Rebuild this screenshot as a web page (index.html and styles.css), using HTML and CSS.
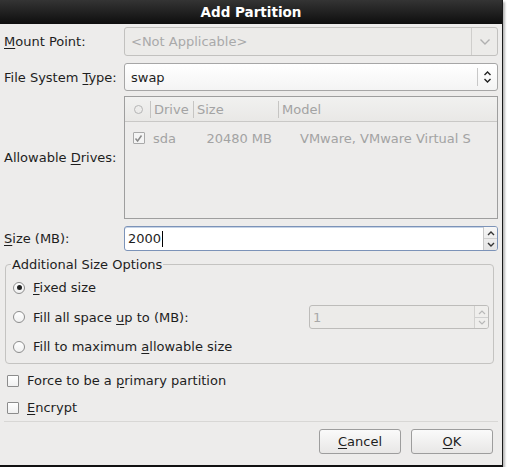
FILE: index.html
```html
<!DOCTYPE html>
<html>
<head>
<meta charset="utf-8">
<link rel="stylesheet" href="styles.css">
</head>
<body>
<div class="window">
  <div class="titlebar">Add Partition</div>
  <div class="content">
    <div class="row row-mount">
      <div class="label"><u>M</u>ount Point:</div>
      <div class="combo disabled">
        <span class="combo-text">&lt;Not Applicable&gt;</span>
        <span class="combo-btn">
          <svg width="12" height="8" viewBox="0 0 12 8"><path d="M1.5 1.5 L6 6 L10.5 1.5" fill="none" stroke="#b0b0b0" stroke-width="1.4"/></svg>
        </span>
      </div>
    </div>
    <div class="row row-fs">
      <div class="label">File System <u>T</u>ype:</div>
      <div class="combo active">
        <span class="combo-text">swap</span>
        <span class="combo-btn sep">
          <svg width="9" height="14" viewBox="0 0 9 14"><path d="M1.5 5 L4.5 2 L7.5 5 M1.5 9 L4.5 12 L7.5 9" fill="none" stroke="#222" stroke-width="1.4"/></svg>
        </span>
      </div>
    </div>
    <div class="row row-drives">
      <div class="label">Allowable <u>D</u>rives:</div>
      <div class="drives">
        <div class="drives-head">
          <div class="c1"><span class="hcircle"></span></div>
          <div class="c2">Drive</div>
          <div class="c3">Size</div>
          <div class="c4">Model</div>
        </div>
        <div class="drives-row">
          <div class="c1"><span class="check checked-dis">
            <svg width="9" height="9" viewBox="0 0 9 9"><path d="M1.5 4.5 L3.6 7 L7.5 1.5" fill="none" stroke="#8a8a8a" stroke-width="1.5"/></svg>
          </span></div>
          <div class="c2">sda</div>
          <div class="c3 num">20480 MB</div>
          <div class="c4 model">VMware, VMware Virtual S</div>
        </div>
      </div>
    </div>
    <div class="row row-size">
      <div class="label"><u>S</u>ize (MB):</div>
      <div class="spin focused">
        <span class="spin-text">2000<span class="caret"></span></span>
        <span class="spin-btns">
          <span class="sb"><svg width="8" height="6" viewBox="0 0 8 6"><path d="M1 5 L4 2 L7 5" fill="none" stroke="#333" stroke-width="1.4"/></svg></span>
          <span class="sb"><svg width="8" height="6" viewBox="0 0 8 6"><path d="M1 1 L4 4 L7 1" fill="none" stroke="#333" stroke-width="1.4"/></svg></span>
        </span>
      </div>
    </div>
    <fieldset class="group">
      <legend>Additional Size Options</legend>
      <div class="opt">
        <span class="radio on"></span><span><u>F</u>ixed size</span>
      </div>
      <div class="opt opt-fill">
        <span class="radio"></span><span>Fill all space <u>u</u>p to (MB):</span>
        <div class="spin small disabled">
          <span class="spin-text">1</span>
          <span class="spin-btns">
            <span class="sb"><svg width="8" height="6" viewBox="0 0 8 6"><path d="M1 5 L4 2 L7 5" fill="none" stroke="#b8b8b8" stroke-width="1.2"/></svg></span>
            <span class="sb"><svg width="8" height="6" viewBox="0 0 8 6"><path d="M1 1 L4 4 L7 1" fill="none" stroke="#b8b8b8" stroke-width="1.2"/></svg></span>
          </span>
        </div>
      </div>
      <div class="opt">
        <span class="radio"></span><span>Fill to maximum <u>a</u>llowable size</span>
      </div>
    </fieldset>
    <div class="chk-row chk-first">
      <span class="check"></span><span>Force to be a <u>p</u>rimary partition</span>
    </div>
    <div class="chk-row">
      <span class="check"></span><span><u>E</u>ncrypt</span>
    </div>
    <div class="buttons">
      <button class="btn"><u>C</u>ancel</button>
      <button class="btn"><u>O</u>K</button>
    </div>
  </div>
</div>
</body>
</html>
```

FILE: styles.css
```css
html, body {
  margin: 0;
  padding: 0;
  background: #ffffff;
}
body {
  font-family: "DejaVu Sans", "Liberation Sans", sans-serif;
  font-size: 13px;
  color: #1e1e1e;
}
u { text-decoration: underline; text-underline-offset: 2px; }

.window {
  width: 502px;
  height: 465px;
  background: #edeceb;
  border-right: 1px solid #1a1a1a;
  border-bottom: 2px solid #111;
  box-shadow: 2px 2px 2px #b8b8b8;
  box-sizing: content-box;
  display: flex;
  flex-direction: column;
  overflow: hidden;
}
.titlebar {
  flex: none;
  height: 24px;
  background: linear-gradient(#343434, #0e0e0e);
  color: #fff;
  font-weight: bold;
  font-size: 13.5px;
  display: flex;
  align-items: center;
  justify-content: center;
}
.content {
  padding: 3px 4px 0 4px;
  display: flex;
  flex-direction: column;
}
.row {
  display: flex;
  align-items: center;
  flex: none;
}
.label {
  width: 120px;
  flex: none;
}
.combo {
  flex: 1;
  display: flex;
  align-items: center;
  border: 1px solid #a6a6a6;
  border-radius: 3px;
  box-sizing: border-box;
}
.row-mount .combo { height: 29px; }
.row-fs { margin-top: 7px; }
.row-fs .combo { height: 28px; }
.combo.disabled {
  background: #ecebe9;
  color: #a9a9a9;
  border-color: #c2c1bf;
}
.combo.active {
  background: linear-gradient(#ffffff, #f4f4f4);
}
.combo-text {
  flex: 1;
  padding-left: 6px;
}
.combo-btn {
  width: 25px;
  height: 100%;
  display: flex;
  align-items: center;
  justify-content: center;
  border-left: 1px solid #cfcecc;
}
.combo-btn.sep {
  border-left: none;
  position: relative;
  width: 20px;
}
.combo-btn.sep::before {
  content: "";
  position: absolute;
  left: 0;
  top: 4px;
  bottom: 4px;
  border-left: 1px solid #c8c8c8;
}

.row-drives { margin-top: 5px; }
.drives {
  flex: 1;
  height: 123px;
  border: 1px solid #9e9e9e;
  background: #edeceb;
  box-sizing: border-box;
  color: #a3a3a3;
}
.drives-head, .drives-row {
  display: flex;
  align-items: center;
}
.drives-head {
  height: 25px;
  background: linear-gradient(#f1f1f0, #e9e8e6);
  border-bottom: 1px solid #c9c8c6;
  box-sizing: border-box;
}
.drives-head > div {
  height: 17px;
  display: flex;
  align-items: center;
}
.drives-head .c2, .drives-head .c3, .drives-head .c4 {
  border-left: 1px solid #c6c5c3;
  padding-left: 3px;
}
.c1 { width: 25px; flex: none; display: flex; justify-content: center; }
.c2 { width: 40px; flex: none; }
.c3 { width: 81px; flex: none; }
.c4 { flex: 1; }
.drives-head .c1 { width: 25px; }
.drives-head .c2 { width: 39px; }
.drives-head .c3 { width: 81px; }
.hcircle {
  width: 9px;
  height: 9px;
  border: 1px solid #b5b5b5;
  border-radius: 50%;
  box-sizing: border-box;
  margin-left: 2px;
}
.drives-row {
  height: 32px;
}
.drives-row .c2 { padding-left: 3px; width: 53px; }
.drives-row .c3 { width: 66px; text-align: right; justify-content: flex-end; }
.drives-row .c4.model { padding-left: 28px; white-space: nowrap; overflow: hidden; }
.drives-row .c1 { width: 25px; }

.check {
  width: 12px;
  height: 12px;
  border: 1px solid #8c8c8c;
  background: linear-gradient(#ffffff, #f0f0f0);
  box-sizing: border-box;
  display: inline-flex;
  align-items: center;
  justify-content: center;
  flex: none;
  border-radius: 1px;
}
.check.checked-dis {
  border-color: #a9a9a9;
  background: #f4f4f4;
  margin-left: 2px;
}

.row-size { margin-top: 7px; }
.spin {
  flex: 1;
  display: flex;
  align-items: stretch;
  border: 1px solid #a6a6a6;
  border-radius: 3px;
  box-sizing: border-box;
  height: 25px;
  background: #fff;
}
.spin.focused {
  border-color: #7c93b8;
  box-shadow: inset 0 1px 0 #c6d3e6;
}
.spin-text {
  flex: 1;
  display: flex;
  align-items: center;
  padding-left: 3px;
}
.caret {
  display: inline-block;
  width: 1px;
  height: 16px;
  background: #000;
  margin-left: 1px;
}
.spin-btns {
  width: 13px;
  display: flex;
  flex-direction: column;
  border-left: 1px solid #c8c8c8;
  background: linear-gradient(#f6f6f6, #e4e4e4);
  border-radius: 0 2px 2px 0;
}
.sb {
  flex: 1;
  display: flex;
  align-items: center;
  justify-content: center;
}
.sb + .sb { border-top: 1px solid #d0d0d0; }

.group {
  flex: none;
  margin: 6px 4px 0 1px;
  padding: 1px 0 1px 7px;
  border: 1px solid #c4c3c1;
  border-radius: 4px;
  min-width: 0;
}
.group legend {
  padding: 0 1px;
  margin-left: -2px;
  line-height: 15px;
}
.opt {
  display: flex;
  align-items: center;
  height: 29.5px;
  gap: 8px;
}
.radio {
  width: 12px;
  height: 12px;
  border: 1px solid #8c8c8c;
  border-radius: 50%;
  box-sizing: border-box;
  background: linear-gradient(#ffffff, #f0f0f0);
  flex: none;
  display: flex;
  align-items: center;
  justify-content: center;
}
.radio.on::after {
  content: "";
  width: 5px;
  height: 5px;
  border-radius: 50%;
  background: #222;
}
.spin.small {
  flex: none;
  width: 180px;
  margin-left: auto;
  margin-right: 4px;
  height: 24px;
}
.spin.disabled {
  background: #ecebe9;
  color: #a8a8a8;
  border-color: #bdbcba;
}
.spin.disabled .spin-btns {
  background: #efeeec;
  border-left-color: #d2d1cf;
}

.chk-row {
  flex: none;
  display: flex;
  align-items: center;
  gap: 8px;
  height: 27px;
  padding-left: 3px;
}
.chk-first { margin-top: 3.5px; }
.buttons {
  flex: none;
  border-top: 1px solid #d8d7d5;
  display: flex;
  justify-content: flex-end;
  gap: 10px;
  padding: 7px 5px 0 0;
}
.btn {
  width: 82px;
  height: 25px;
  border: 1px solid #9d9d9d;
  border-radius: 3px;
  background: linear-gradient(#fafafa, #e8e7e6);
  font-family: inherit;
  font-size: 13px;
  color: #1e1e1e;
  padding: 0;
}
```
